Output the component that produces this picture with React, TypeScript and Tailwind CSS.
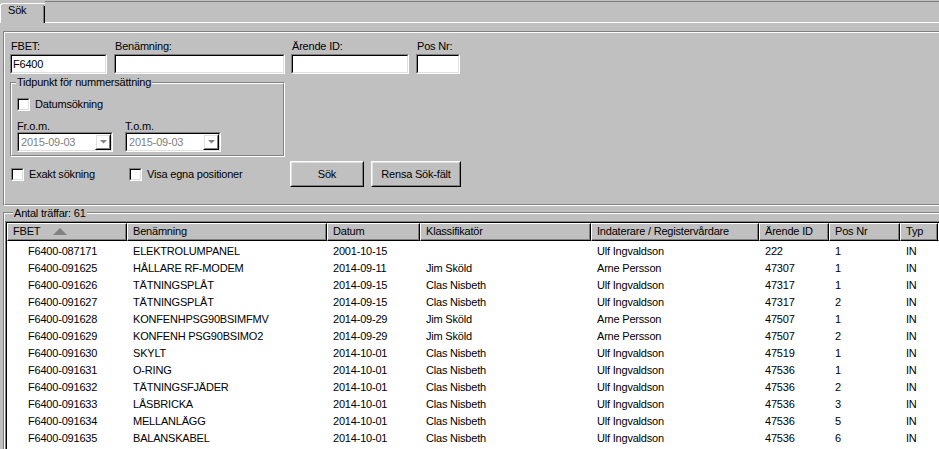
import React from "react";

const FONT = { fontFamily: '"Liberation Sans", Arial, sans-serif' };

function Checkbox() {
  return (
    <div className="w-[13px] h-[13px] border border-t-[#808080] border-l-[#808080] border-b-white border-r-white">
      <div className="h-full w-full border border-t-black border-l-black border-b-[#dfdfdf] border-r-[#dfdfdf] bg-white" />
    </div>
  );
}

function Sunken({ className = "", children }: { className?: string; children?: React.ReactNode }) {
  return (
    <div className={"border border-t-[#808080] border-l-[#808080] border-b-white border-r-white " + className}>
      <div className="h-full w-full border border-t-black border-l-black border-b-[#dfdfdf] border-r-[#dfdfdf] bg-white flex items-center">
        {children}
      </div>
    </div>
  );
}

function Raised({ className = "", children }: { className?: string; children?: React.ReactNode }) {
  return (
    <div className={"border border-t-white border-l-white border-b-black border-r-black " + className}>
      <div className="h-full w-full border border-t-[#dfdfdf] border-l-[#dfdfdf] border-b-[#808080] border-r-[#808080] flex items-center justify-center">
        {children}
      </div>
    </div>
  );
}

function Combo({ value }: { value: string }) {
  return (
    <Sunken className="w-[96px] h-[20px]">
      <span className="flex-1 pl-[2px] text-[#808080] leading-[13px]">{value}</span>
      <Raised className="w-[16px] h-[16px]">
        <svg width="9" height="6" viewBox="0 0 9 6">
          <path d="M1 1 H8 L4.5 4.5 Z" fill="#808080" />
          <path d="M5 5 L8 2" stroke="#ffffff" strokeWidth="1" />
        </svg>
      </Raised>
    </Sunken>
  );
}

function Field({ label, w, ml, value }: { label: string; w: number; ml: string; value?: string }) {
  return (
    <div className={"flex flex-col " + ml} style={{ width: w }}>
      <div className="h-[14px] leading-[13px] pl-[1px] whitespace-nowrap">{label}</div>
      <Sunken className="h-[20px] w-full">
        <span className="pl-[1px] leading-[13px]">{value ?? ""}</span>
      </Sunken>
    </div>
  );
}

const cols = [
  { name: "FBET", w: 120 },
  { name: "Benämning", w: 200 },
  { name: "Datum", w: 93 },
  { name: "Klassifikatör", w: 171 },
  { name: "Indaterare / Registervårdare", w: 168 },
  { name: "Ärende ID", w: 70 },
  { name: "Pos Nr", w: 71 },
  { name: "Typ", w: 38 },
];

const rows: string[][] = [
  ["F6400-087171", "ELEKTROLUMPANEL", "2001-10-15", "", "Ulf Ingvaldson", "222", "1", "IN"],
  ["F6400-091625", "HÅLLARE RF-MODEM", "2014-09-11", "Jim Sköld", "Arne Persson", "47307", "1", "IN"],
  ["F6400-091626", "TÄTNINGSPLÅT", "2014-09-15", "Clas Nisbeth", "Ulf Ingvaldson", "47317", "1", "IN"],
  ["F6400-091627", "TÄTNINGSPLÅT", "2014-09-15", "Clas Nisbeth", "Ulf Ingvaldson", "47317", "2", "IN"],
  ["F6400-091628", "KONFENHPSG90BSIMFMV", "2014-09-29", "Jim Sköld", "Arne Persson", "47507", "1", "IN"],
  ["F6400-091629", "KONFENH PSG90BSIMO2", "2014-09-29", "Jim Sköld", "Arne Persson", "47507", "2", "IN"],
  ["F6400-091630", "SKYLT", "2014-10-01", "Clas Nisbeth", "Ulf Ingvaldson", "47519", "1", "IN"],
  ["F6400-091631", "O-RING", "2014-10-01", "Clas Nisbeth", "Ulf Ingvaldson", "47536", "1", "IN"],
  ["F6400-091632", "TÄTNINGSFJÄDER", "2014-10-01", "Clas Nisbeth", "Ulf Ingvaldson", "47536", "2", "IN"],
  ["F6400-091633", "LÅSBRICKA", "2014-10-01", "Clas Nisbeth", "Ulf Ingvaldson", "47536", "3", "IN"],
  ["F6400-091634", "MELLANLÄGG", "2014-10-01", "Clas Nisbeth", "Ulf Ingvaldson", "47536", "5", "IN"],
  ["F6400-091635", "BALANSKABEL", "2014-10-01", "Clas Nisbeth", "Ulf Ingvaldson", "47536", "6", "IN"],
];

function HeaderCell({ name, w, first }: { name: string; w: number; first?: boolean }) {
  return (
    <div
      className="h-[18px] shrink-0 border border-t-white border-l-white border-b-black border-r-black"
      style={{ width: w }}
    >
      <div className="h-full w-full border-r border-b border-[#808080] flex items-center pl-[5px] leading-[13px] whitespace-nowrap overflow-hidden">
        <span>{name}</span>
        {first && (
          <svg className="ml-[13px]" width="14" height="7" viewBox="0 0 14 7">
            <path d="M7 0 L14 7 H0 Z" fill="#808080" />
          </svg>
        )}
      </div>
    </div>
  );
}

export default function App() {
  return (
    <div
      className="w-[939px] h-[449px] bg-[#c0c0c0] overflow-hidden text-[11px] text-black tracking-[-0.2px]"
      style={FONT}
    >
      {/* Tab strip */}
      <div className="flex h-[23px]">
        <div className="mt-[3px] h-[20px] w-[45px] border-l border-t border-white rounded-tl-[3px] flex">
          <div className="flex-1 pl-[7px] leading-[13px]">Sök</div>
          <div className="w-[1px] mt-[1px] bg-[#808080]" />
          <div className="w-[1px] mt-[2px] bg-black" />
        </div>
        <div className="flex-1 pt-[1px]">
          <div className="h-full border-t border-t-[#808080] border-b border-b-white" />
        </div>
      </div>

      <div className="pl-[3px] pt-[8px]">
        {/* Form panel */}
        <div className="h-[175px] w-[1000px] border border-t-[#808080] border-l-[#808080] border-b-white border-r-white">
          <div className="h-full w-full border border-t-white border-l-white border-b-[#808080] border-r-[#808080] pl-[5px] pt-[7px]">
            <div className="flex">
              <Field label="FBET:" w={97} ml="" value="F6400" />
              <Field label="Benämning:" w={171} ml="ml-[7px]" />
              <Field label="Ärende ID:" w={118} ml="ml-[6px]" />
              <Field label="Pos Nr:" w={44} ml="ml-[7px]" />
            </div>

            {/* Group box */}
            <div className="relative mt-[8px] w-[275px] h-[75px] border border-t-[#808080] border-l-[#808080] border-b-white border-r-white">
              <div className="h-full w-full border border-t-white border-l-white border-b-[#808080] border-r-[#808080] pl-[5px] pt-[14px]">
                <div className="flex items-center h-[13px]">
                  <Checkbox />
                  <span className="ml-[5px] leading-[13px]">Datumsökning</span>
                </div>
                <div className="flex mt-[9px]">
                  <div className="flex flex-col w-[96px]">
                    <div className="h-[12px] leading-[13px]">Fr.o.m.</div>
                    <Combo value="2015-09-03" />
                  </div>
                  <div className="flex flex-col w-[96px] ml-[12px]">
                    <div className="h-[12px] leading-[13px]">T.o.m.</div>
                    <Combo value="2015-09-03" />
                  </div>
                </div>
              </div>
              <span className="absolute left-[5px] top-[-7px] px-[1px] bg-[#c0c0c0] leading-[13px] whitespace-nowrap">
                Tidpunkt för nummersättning
              </span>
            </div>

            {/* Bottom row */}
            <div className="flex items-center mt-[4px] h-[26px]">
              <div className="w-[280px] flex items-center">
                <div className="w-[118px] ml-[1px] flex items-center">
                  <Checkbox />
                  <span className="ml-[5px] leading-[13px]">Exakt sökning</span>
                </div>
                <div className="flex items-center">
                  <Checkbox />
                  <span className="ml-[5px] leading-[13px]">Visa egna positioner</span>
                </div>
              </div>
              <Raised className="w-[74px] h-[26px]">
                <span className="leading-[13px]">Sök</span>
              </Raised>
              <Raised className="w-[90px] h-[26px] ml-[7px]">
                <span className="leading-[13px]">Rensa Sök-fält</span>
              </Raised>
            </div>
          </div>
        </div>

        {/* Results group */}
        <div className="relative mt-[6px] w-[1000px] h-[300px] border border-t-[#808080] border-l-[#808080] border-b-white border-r-white">
          <div className="h-full w-full border border-t-white border-l-white border-b-[#808080] border-r-[#808080] pt-[7px]">
            <div className="h-full w-full border border-t-[#808080] border-l-[#808080] border-b-white border-r-white">
              <div className="h-full w-full border border-t-black border-l-black border-b-[#dfdfdf] border-r-[#dfdfdf] bg-white">
                <div className="flex bg-[#c0c0c0]">
                  {cols.map((c, i) => (
                    <HeaderCell key={c.name} name={c.name} w={c.w} first={i === 0} />
                  ))}
                  <div className="flex-1 h-[18px] border border-t-white border-l-white border-b-black border-r-black" />
                </div>
                <div className="pt-[2px]">
                  {rows.map((r, ri) => (
                    <div key={ri} className="flex h-[17px] items-center">
                      {r.map((cell, ci) => (
                        <div
                          key={ci}
                          className={
                            "shrink-0 whitespace-nowrap overflow-hidden leading-[13px] " +
                            (ci === 0 ? "pl-[21px]" : "pl-[6px]")
                          }
                          style={{ width: cols[ci].w }}
                        >
                          {cell}
                        </div>
                      ))}
                    </div>
                  ))}
                </div>
              </div>
            </div>
          </div>
          <span className="absolute left-[9px] top-[-6px] px-[1px] bg-[#c0c0c0] leading-[13px] whitespace-nowrap">
            Antal träffar: 61
          </span>
        </div>
      </div>
    </div>
  );
}
